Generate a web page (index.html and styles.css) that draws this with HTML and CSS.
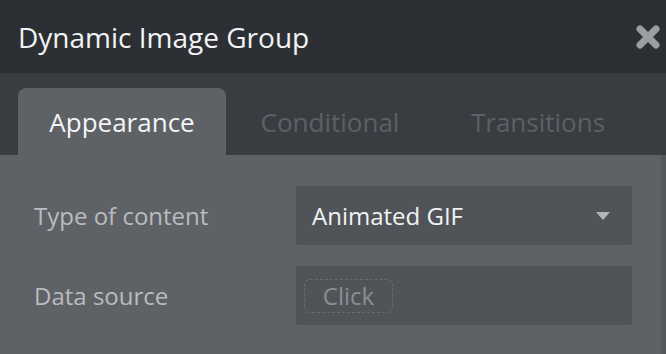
FILE: index.html
```html
<!DOCTYPE html>
<html lang="en">
<head>
  <meta charset="UTF-8" />
  <meta name="viewport" content="width=device-width, initial-scale=1" />
  <title>Dynamic Image Group</title>
  <link rel="stylesheet" href="styles.css">
</head>
<body>
  <div class="editor">
    <header class="title-bar">
      <h1>Dynamic Image Group</h1>
      <span class="close-btn" aria-label="Close">
        <svg width="24" height="24" viewBox="0 0 24 24">
          <path d="M4 4 L20 20 M20 4 L4 20" stroke="#9b9fa3" stroke-width="7" stroke-linecap="round" />
        </svg>
      </span>
    </header>

    <nav class="tabs">
      <a class="tab active" href="#">Appearance</a>
      <a class="tab" href="#">Conditional</a>
      <a class="tab" href="#">Transitions</a>
    </nav>

    <section class="props">
      <div class="prop-row">
        <span class="prop-label">Type of content</span>
        <div class="field select">
          <span>Animated GIF</span>
          <svg class="caret" width="14" height="8" viewBox="0 0 14 8">
            <path d="M0 0 H14 L7 8 Z" fill="#b3b6b9" />
          </svg>
        </div>
      </div>
      <div class="prop-row">
        <span class="prop-label">Data source</span>
        <div class="field">
          <span class="click-box">Click</span>
        </div>
      </div>
    </section>
  </div>
</body>
</html>
```

FILE: styles.css
```css
body {
  margin: 0;
  font-family: 'Open Sans', 'Noto Sans', sans-serif;
  background: #5e6267;
  overflow: hidden;
}
.editor {
  width: 666px;
  height: 354px;
  display: flex;
  flex-direction: column;
}
.title-bar {
  height: 73px;
  background: #2c3034;
  display: flex;
  align-items: center;
  justify-content: space-between;
  padding: 0 6px 0 18px;
  flex-shrink: 0;
}
.title-bar h1 {
  margin: 0;
  font-size: 28px;
  font-weight: 400;
  color: #f2f3f4;
}
.close-btn {
  display: flex;
  cursor: pointer;
}
.tabs {
  height: 82px;
  background: #393d42;
  display: flex;
  align-items: flex-end;
  padding-left: 18px;
  flex-shrink: 0;
}
.tab {
  width: 208px;
  height: 67px;
  display: flex;
  align-items: center;
  justify-content: center;
  font-size: 26px;
  color: #5c6065;
  text-decoration: none;
  border-radius: 8px 8px 0 0;
}
.tab.active {
  background: #5e6267;
  color: #f4f5f6;
}
.props {
  flex: 1;
  padding: 31px 0 0 34px;
  display: flex;
  flex-direction: column;
  gap: 21px;
  border-right: 5px solid #54585c;
}
.prop-row {
  display: flex;
  align-items: center;
}
.prop-label {
  width: 262px;
  font-size: 24px;
  color: #b9bbbe;
}
.field {
  width: 336px;
  height: 59px;
  box-sizing: border-box;
  background: #505458;
  border-radius: 3px;
  display: flex;
  align-items: center;
  padding: 0 8px;
}
.select {
  padding: 0 22px 0 16px;
  justify-content: space-between;
  font-size: 24px;
  color: #f1f2f3;
}
.click-box {
  width: 89px;
  height: 34px;
  box-sizing: border-box;
  border: 1.5px dashed #686c70;
  border-radius: 6px;
  display: flex;
  align-items: center;
  justify-content: center;
  font-size: 24px;
  color: #8b8e92;
}
```
